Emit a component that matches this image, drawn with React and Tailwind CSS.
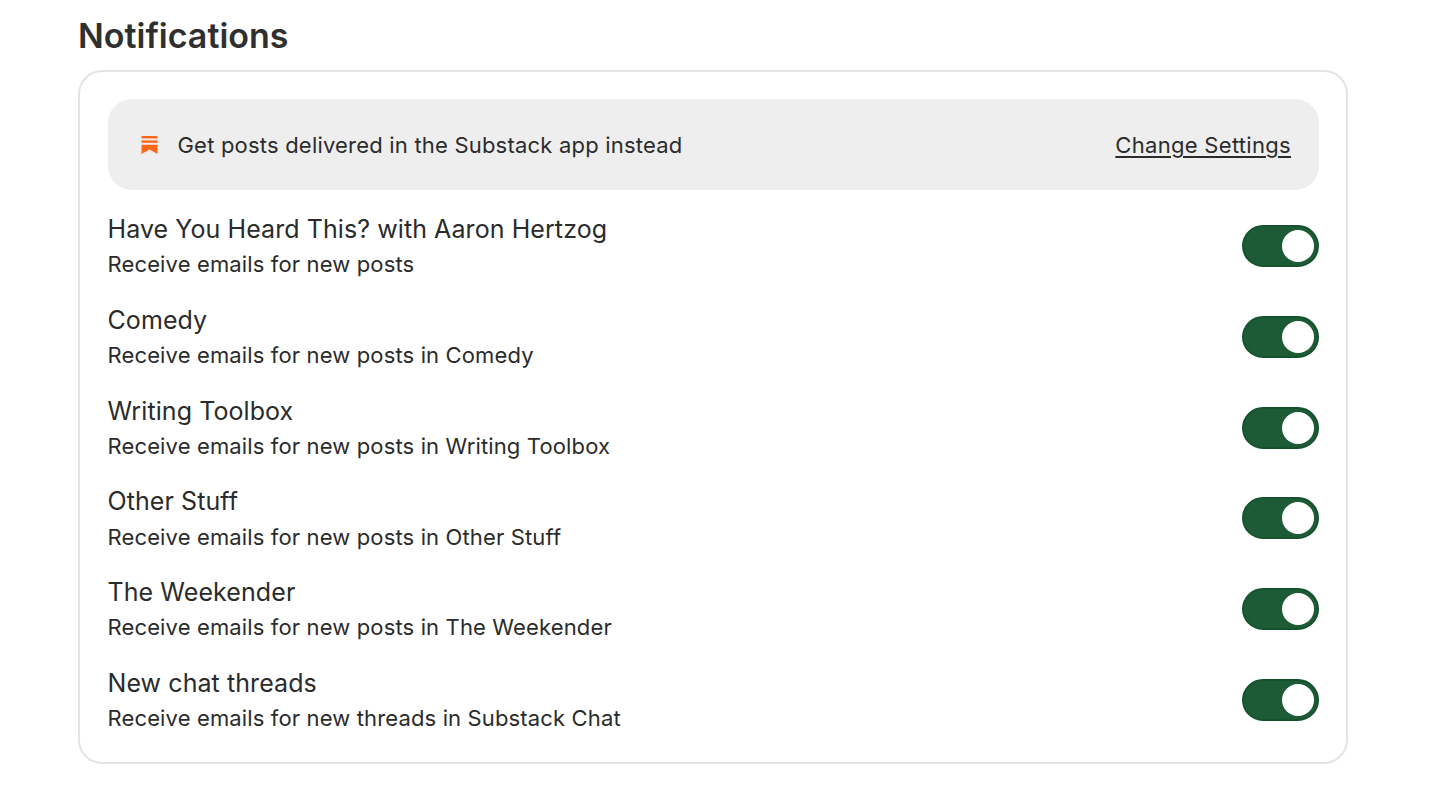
import React from "react";

const rows = [
  { title: "Have You Heard This? with Aaron Hertzog", sub: "Receive emails for new posts" },
  { title: "Comedy", sub: "Receive emails for new posts in Comedy" },
  { title: "Writing Toolbox", sub: "Receive emails for new posts in Writing Toolbox" },
  { title: "Other Stuff", sub: "Receive emails for new posts in Other Stuff" },
  { title: "The Weekender", sub: "Receive emails for new posts in The Weekender" },
  { title: "New chat threads", sub: "Receive emails for new threads in Substack Chat" },
];

const SubstackIcon = () => (
  <svg width="17" height="18" viewBox="0 0 17 18" fill="#ff6719" className="shrink-0">
    <rect x="0.5" y="0" width="16" height="2.4" />
    <rect x="0.5" y="4.4" width="16" height="2.4" />
    <path d="M0.5 8.8H16.5V18L8.5 13.6L0.5 18Z" />
  </svg>
);

const Toggle = () => (
  <div className="w-[77px] h-[42px] rounded-full bg-[#1d5b37] border-[2px] border-[#14532d] flex items-center justify-end pr-[3px] shrink-0">
    <div className="w-[32px] h-[32px] rounded-full bg-white" />
  </div>
);

export default function App() {
  return (
    <div className="h-[787px] bg-white text-[#2b2b2b] overflow-hidden pl-[78px] pr-[108px] font-['Inter',sans-serif]">
      <h1 className="pt-[16px] h-[70px] text-[34px] leading-[40px] font-semibold text-[#2f2f2f]">Notifications</h1>
      <div className="h-[694px] border-[2px] border-[#e4e4e4] rounded-[24px] pl-[27.5px] pr-[27px] pt-[27px]">
        <div className="h-[91px] rounded-[24px] bg-[#eeeeee] flex items-center pl-[33px] pr-[28px]">
          <SubstackIcon />
          <span className="ml-[20px] mt-[2px] text-[22px] tracking-[0.2px]">Get posts delivered in the Substack app instead</span>
          <a className="ml-auto mt-[2px] text-[22px] tracking-[0.3px] underline decoration-[1.5px] underline-offset-[3px]">Change Settings</a>
        </div>
        <div className="mt-[21px]">
          {rows.map((row) => (
            <div key={row.title} className="h-[90.8px] flex items-start justify-between">
              <div>
                <div className="text-[25px] leading-[36px] tracking-[0.08px]">{row.title}</div>
                <div className="text-[22px] leading-[32px] mt-[1.2px] tracking-[0.14px]">{row.sub}</div>
              </div>
              <div className="mt-[14px]">
                <Toggle />
              </div>
            </div>
          ))}
        </div>
      </div>
    </div>
  );
}
